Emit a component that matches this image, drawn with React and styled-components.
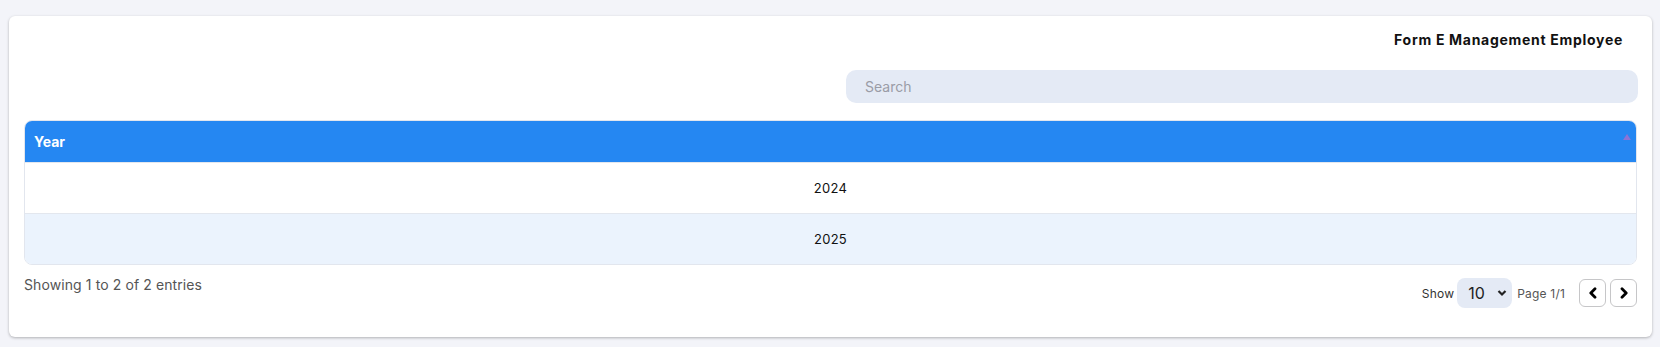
import React from 'react';
import styled, { createGlobalStyle } from 'styled-components';

const GlobalStyle = createGlobalStyle`
  body {
    margin: 0;
    background: #f3f4f9;
    font-family: "Inter", "Open Sans", sans-serif;
  }
`;

const years = [2024, 2025];

const Page = styled.div`
  padding: 16px 8px 10px 9px;
`;

const Card = styled.div`
  background: #fff;
  border-radius: 6px;
  box-shadow: 0 1px 3px rgba(0, 0, 0, 0.28);
  padding: 14px 15px 29px 15px;
`;

const TitleRow = styled.div`
  display: flex;
  justify-content: flex-end;
  padding-right: 14px;
`;

const Title = styled.h2`
  margin: 0;
  font-size: 14px;
  line-height: 20px;
  font-weight: 700;
  letter-spacing: 0.7px;
  color: #111;
`;

const SearchRow = styled.div`
  display: flex;
  justify-content: flex-end;
  margin-top: 20px;
`;

const SearchInput = styled.input`
  width: 792px;
  height: 33px;
  box-sizing: border-box;
  border: none;
  outline: none;
  border-radius: 10px;
  background: #e4eaf5;
  padding: 0 19px;
  font-family: inherit;
  font-size: 14px;
  color: #333;
  margin-right: -1px;

  &::placeholder {
    color: #9a9ca6;
  }
`;

const Table = styled.div`
  margin-top: 17px;
  border: 1px solid #e2e6ee;
  border-radius: 8px;
  overflow: hidden;
`;

const HeaderCell = styled.div`
  position: relative;
  height: 41px;
  background: #2587f2;
  color: #fff;
  font-weight: 700;
  font-size: 14px;
  display: flex;
  align-items: center;
  padding-left: 9px;
`;

const SortMark = styled.span`
  position: absolute;
  right: 5px;
  top: 13px;
  width: 0;
  height: 0;
  border-left: 4px solid transparent;
  border-right: 4px solid transparent;
  border-bottom: 6px solid #8b73d6;
`;

const Row = styled.div`
  height: 50px;
  display: flex;
  align-items: center;
  justify-content: center;
  font-size: 13px;
  letter-spacing: 0.3px;
  color: #111;
  background: ${({ $striped }) => ($striped ? '#ebf3fd' : '#fff')};
  border-top: 1px solid #e3e7ee;
`;

const Footer = styled.div`
  display: flex;
  justify-content: space-between;
  align-items: flex-start;
  margin-top: 10px;
`;

const Info = styled.div`
  font-size: 14px;
  line-height: 20px;
  letter-spacing: 0.1px;
  color: #555;
`;

const Pager = styled.div`
  display: flex;
  align-items: center;
  margin-top: 3px;
`;

const Label = styled.span`
  font-size: 12px;
  letter-spacing: 0.2px;
  color: ${({ $muted }) => ($muted ? '#555' : '#333')};
`;

const SelectBox = styled.div`
  position: relative;
  width: 55px;
  height: 30px;
  margin: 0 5px 0 3px;
  border-radius: 8px;
  background: #e4eaf5;
  display: flex;
  align-items: center;
  padding-left: 11px;
  box-sizing: border-box;
  font-size: 16px;
  color: #222;
`;

const Caret = styled.svg`
  position: absolute;
  right: 5px;
  top: 11px;
`;

const Buttons = styled.div`
  display: flex;
  gap: 4px;
  margin-left: 14px;
`;

const NavButton = styled.button`
  width: 27px;
  height: 28px;
  box-sizing: border-box;
  border: 1px solid #c6c6c8;
  border-radius: 6px;
  background: #fff;
  display: flex;
  align-items: center;
  justify-content: center;
  padding: 0;
`;

const Chevron = ({ dir }) => (
  <svg width="10" height="12" viewBox="0 0 10 12">
    <path
      d={dir === 'left' ? 'M7 1.8 L2.8 6 L7 10.2' : 'M3 1.8 L7.2 6 L3 10.2'}
      fill="none"
      stroke="#000"
      strokeWidth="2.8"
      strokeLinecap="round"
      strokeLinejoin="round"
    />
  </svg>
);

export default function App() {
  return (
    <Page>
      <GlobalStyle />
      <Card>
        <TitleRow>
          <Title>Form E Management Employee</Title>
        </TitleRow>
        <SearchRow>
          <SearchInput placeholder="Search" />
        </SearchRow>
        <Table>
          <HeaderCell>
            Year
            <SortMark />
          </HeaderCell>
          {years.map((y, i) => (
            <Row key={y} $striped={i % 2 === 1}>{y}</Row>
          ))}
        </Table>
        <Footer>
          <Info>Showing 1 to 2 of 2 entries</Info>
          <Pager>
            <Label>Show</Label>
            <SelectBox>
              10
              <Caret width="10" height="8" viewBox="0 0 10 8">
                <path d="M1.5 2 L5 5.5 L8.5 2" fill="none" stroke="#222" strokeWidth="2.2" />
              </Caret>
            </SelectBox>
            <Label $muted>Page 1/1</Label>
            <Buttons>
              <NavButton><Chevron dir="left" /></NavButton>
              <NavButton><Chevron dir="right" /></NavButton>
            </Buttons>
          </Pager>
        </Footer>
      </Card>
    </Page>
  );
}
